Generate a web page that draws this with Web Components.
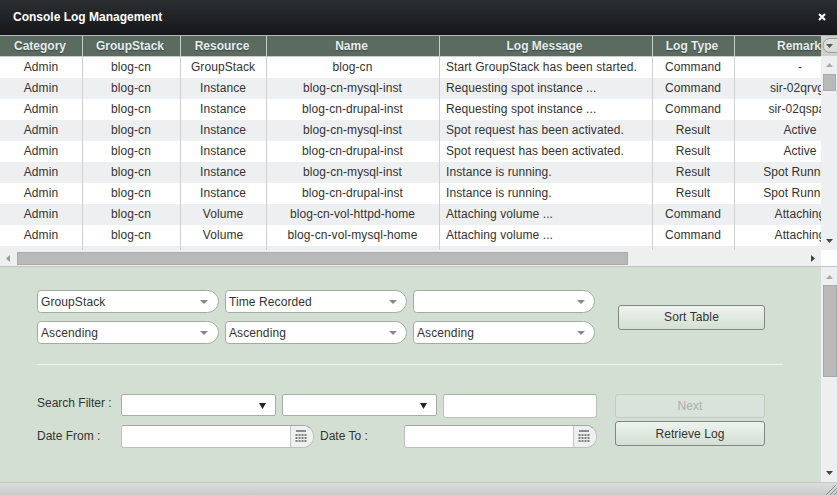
<!DOCTYPE html>
<html>
<head>
<meta charset="utf-8">
<title>Console Log Management</title>
<style>
    html, body { margin: 0; height: 100%; overflow: hidden; background: #eeeff1; }
    body { font: 12px "Liberation Sans", Arial, sans-serif; color: #333; }
</style>
</head>
<body>
<log-window heading="Console Log Management">
    <log-table></log-table>
    <filter-panel></filter-panel>
</log-window>
<script>
const ROWS = [
    ['Admin', 'blog-cn', 'GroupStack', 'blog-cn', 'Start GroupStack has been started.', 'Command', '-'],
    ['Admin', 'blog-cn', 'Instance', 'blog-cn-mysql-inst', 'Requesting spot instance ...', 'Command', 'sir-02qrvgk'],
    ['Admin', 'blog-cn', 'Instance', 'blog-cn-drupal-inst', 'Requesting spot instance ...', 'Command', 'sir-02qspak'],
    ['Admin', 'blog-cn', 'Instance', 'blog-cn-mysql-inst', 'Spot request has been activated.', 'Result', 'Active'],
    ['Admin', 'blog-cn', 'Instance', 'blog-cn-drupal-inst', 'Spot request has been activated.', 'Result', 'Active'],
    ['Admin', 'blog-cn', 'Instance', 'blog-cn-mysql-inst', 'Instance is running.', 'Result', 'Spot Running'],
    ['Admin', 'blog-cn', 'Instance', 'blog-cn-drupal-inst', 'Instance is running.', 'Result', 'Spot Running'],
    ['Admin', 'blog-cn', 'Volume', 'blog-cn-vol-httpd-home', 'Attaching volume ...', 'Command', 'Attaching'],
    ['Admin', 'blog-cn', 'Volume', 'blog-cn-vol-mysql-home', 'Attaching volume ...', 'Command', 'Attaching'],
    ['', '', '', '', '', '', '']
]
const COLUMNS = ['Category', 'GroupStack', 'Resource', 'Name', 'Log Message', 'Log Type', 'Remark']

class LogWindow extends HTMLElement {
    constructor() {
        super()
        this.root = this.attachShadow({ mode: 'open' })
    }

    connectedCallback() {
        this.root.innerHTML = `<style>
      :host {
        display: flex;
        flex-direction: column;
        width: 837px;
        height: 495px;
        overflow: hidden;
      }
      header {
        flex: 0 0 35px;
        display: flex;
        align-items: center;
        justify-content: space-between;
        padding: 0 11px 2px 13px;
        box-sizing: border-box;
        background: linear-gradient(#2b2f32, #15171a);
        color: #fff;
        font-weight: bold;
      }
      svg { display: block; }
      main { flex: 1; display: flex; flex-direction: column; min-height: 0; }
      footer {
        flex: 0 0 13px;
        display: flex;
        justify-content: flex-end;
        align-items: flex-end;
        background: linear-gradient(#dcdddd, #c9caca);
        border-top: 1px solid #c6c8c6;
        box-sizing: border-box;
      }
    </style>
    <header>
        <span>${this.getAttribute('heading')}</span>
        <svg width="8" height="8" viewBox="0 0 8 8"><path d="M1 1L7 7M7 1L1 7" stroke="#fff" stroke-width="2"/></svg>
    </header>
    <main><slot></slot></main>
    <footer>
        <svg width="11" height="11" viewBox="0 0 11 11" fill="none" stroke="#8f8f8f"><path d="M0 11L10 1M4 11L11 4M8 11L11 8"/></svg>
    </footer>`
    }
}

class ScrollBar extends HTMLElement {
    constructor() {
        super()
        this.root = this.attachShadow({ mode: 'open' })
    }

    connectedCallback() {
        const start = this.getAttribute('start')
        const size = this.getAttribute('size')
        const lead = this.getAttribute('lead') || 7
        const gutter = this.getAttribute('gutter') || 1
        const horizontal = this.getAttribute('orient') === 'h'
        this.root.innerHTML = `<style>
      :host {
        display: flex;
        flex-direction: ${horizontal ? 'row' : 'column'};
        flex: 0 0 16px;
        ${horizontal ? 'height' : 'width'}: 16px;
        align-items: ${horizontal ? 'center' : 'stretch'};
        justify-content: space-between;
        background: #eeeff1;
        box-sizing: border-box;
      }
      .thumb {
        background: #b9b9b9;
        border: 1px solid #a9a9a9;
        box-sizing: border-box;
        ${horizontal
            ? `width: ${size}px; height: 13px; margin-left: ${start}px;`
            : `height: ${size}px; margin: ${start}px ${gutter}px 0 2px;`}
      }
      .track { flex: 1; display: flex; ${horizontal ? '' : 'flex-direction: column;'} }
      svg { display: block; flex: none; }
      .end { ${horizontal ? 'margin: 0 6px;' : 'margin: 0 auto 7px;'} }
      .first { ${horizontal ? 'margin-left: 6px;' : `margin: ${lead}px auto 0;`} }
    </style>
    ${horizontal
        ? `<svg class="first" width="4" height="7" viewBox="0 0 4 7"><path d="M4 0V7L0 3.5Z" fill="#999"/></svg>`
        : `<svg class="first" width="7" height="4" viewBox="0 0 7 4"><path d="M0 4H7L3.5 0Z" fill="#aaa"/></svg>`}
    <div class="track"><div class="thumb"></div></div>
    ${horizontal
        ? `<svg class="end" width="4" height="7" viewBox="0 0 4 7"><path d="M0 0V7L4 3.5Z" fill="#444"/></svg>`
        : `<svg class="end" width="7" height="4" viewBox="0 0 7 4"><path d="M0 0H7L3.5 4Z" fill="#444"/></svg>`}`
    }
}

class LogTable extends HTMLElement {
    constructor() {
        super()
        this.root = this.attachShadow({ mode: 'open' })
    }

    connectedCallback() {
        const head = COLUMNS.map(c => `<div class="th">${c}</div>`).join('')
        const body = ROWS.map((row, r) => row.map((text, i) =>
            `<div class="td ${r % 2 ? 'alt' : ''} ${i === 4 ? 'left' : ''}">${text}</div>`).join('')).join('')
        this.root.innerHTML = `<style>
      :host {
        display: flex;
        flex-direction: column;
        flex: 0 0 232px;
        border-bottom: 1px solid #c0c4c0;
        box-sizing: border-box;
      }
      .top { flex: 0 0 215px; display: flex; min-height: 0; }
      .clip { width: 821px; overflow: hidden; background: #fff; }
      .grid {
        display: grid;
        width: 866px;
        grid-template-columns: 82px 98px 86px 173px 213px 82px 132px;
        grid-template-rows: 21px repeat(10, 21px);
        border-top: 1px solid #b4b8b4;
      }
      .th {
        background: #5b6b60;
        color: #e6edf2;
        font-weight: bold;
        text-align: center;
        line-height: 20px;
        padding-right: 2px;
        box-shadow: inset 1px 0 0 #c8cec9;
        border-bottom: 1px solid #c8cec9;
        text-shadow: 0 1px 1px #39443c;
      }
      .td {
        text-align: center;
        line-height: 20px;
        white-space: nowrap;
        overflow: hidden;
        letter-spacing: .08px;
        box-shadow: inset 1px 0 0 #d0d0d0;
      }
      .th:nth-child(7n+1), .td:nth-child(7n+1) { box-shadow: none; }
      .alt { background: #eeeff1; }
      .left { text-align: left; padding-left: 7px; }
      .side { flex: 0 0 16px; display: flex; flex-direction: column; background: #eeeff1; }
      .menu {
        flex: 0 0 21px;
        background: #cfd1cf;
        border-top: 1px solid #b4b8b4;
        box-sizing: border-box;
      }
      .side scroll-bar { flex: 1; }
      .bottom { flex: 0 0 16px; display: flex; }
      .bottom scroll-bar { flex: 0 0 821px; }
      .corner { flex: 1; background: #fff; }
      svg { display: block; }
    </style>
    <div class="top">
        <div class="clip"><div class="grid">${head}${body}</div></div>
        <div class="side">
            <div class="menu">
                <svg width="16" height="20" viewBox="0 0 16 20"><path d="M16 2.5H9a7 7 0 0 0 0 14H16" fill="#dcdedc" stroke="#9a9d9a"/><path d="M5 8H12L8.5 12Z" fill="#555"/></svg>
            </div>
            <scroll-bar start="7" size="17"></scroll-bar>
        </div>
    </div>
    <div class="bottom">
        <scroll-bar orient="h" start="7" size="611"></scroll-bar>
        <div class="corner"></div>
    </div>`
    }
}

class SortCombo extends HTMLElement {
    constructor() {
        super()
        this.root = this.attachShadow({ mode: 'open' })
    }

    connectedCallback() {
        this.root.innerHTML = `<style>
      :host {
        display: flex;
        align-items: center;
        width: 182px;
        height: 23px;
        padding: 0 10px 0 3px;
        box-sizing: border-box;
        background: #fff;
        border: 1px solid #a4aaa4;
        border-radius: 4px 12px 12px 4px;
        letter-spacing: .1px;
      }
      svg { display: block; margin-left: auto; }
    </style>
    <slot></slot>
    <svg width="8" height="4" viewBox="0 0 8 4"><path d="M0 0H8L4 4Z" fill="#888"/></svg>`
    }
}

class FilterSelect extends HTMLElement {
    constructor() {
        super()
        this.root = this.attachShadow({ mode: 'open' })
    }

    connectedCallback() {
        this.root.innerHTML = `<style>
      :host {
        display: flex;
        align-items: center;
        justify-content: flex-end;
        width: 155px;
        height: 22px;
        padding-right: 9px;
        box-sizing: border-box;
        background: #fff;
        border: 1px solid #a9ada9;
        border-radius: 2px;
      }
      svg { display: block; }
    </style>
    <svg width="7" height="7" viewBox="0 0 7 7"><path d="M0 1H7L3.5 7Z" fill="#222"/></svg>`
    }
}

class DateField extends HTMLElement {
    constructor() {
        super()
        this.root = this.attachShadow({ mode: 'open' })
    }

    connectedCallback() {
        this.root.innerHTML = `<style>
      :host {
        display: flex;
        height: 23px;
        width: ${this.getAttribute('width')}px;
        box-sizing: border-box;
        background: #fff;
        border: 1px solid #bcc0bc;
        border-top-color: #a4a8a4;
        border-radius: 3px 11px 11px 3px;
        overflow: hidden;
      }
      .input { flex: 1; }
      .cal {
        flex: 0 0 23px;
        display: flex;
        align-items: center;
        justify-content: center;
        padding-right: 3px;
        box-sizing: border-box;
        background: #eeeff0;
        border-left: 1px solid #c4c7c4;
      }
      svg { display: block; }
    </style>
    <div class="input"></div>
    <div class="cal">
        <svg width="12" height="13" viewBox="0 0 12 13" fill="#7d7d7d">
            <rect x="1" y="0" width="10" height="2" fill="#8c8c8c"/>
            <path d="M0 4h2v2H0zM3 4h2v2H3zM6 4h2v2H6zM9 4h2v2H9zM0 7h2v2H0zM3 7h2v2H3zM6 7h2v2H6zM9 7h2v2H9zM0 10h2v2H0zM3 10h2v2H3zM6 10h2v2H6zM9 10h2v2H9z" transform="translate(.5 0)"/>
        </svg>
    </div>`
    }
}

class PanelButton extends HTMLElement {
    constructor() {
        super()
        this.root = this.attachShadow({ mode: 'open' })
    }

    connectedCallback() {
        const off = this.hasAttribute('disabled')
        this.root.innerHTML = `<style>
      :host {
        display: flex;
        align-items: center;
        justify-content: center;
        height: ${off ? 24 : 25}px;
        box-sizing: border-box;
        width: ${this.getAttribute('width')}px;
        border: 1px solid ${off ? '#c2ccc2' : '#7e8880'};
        border-radius: 3px;
        background: ${off ? '#d9e3d9' : 'linear-gradient(#eef3ee, #d4dfd4)'};
        color: ${off ? '#a9b0a9' : '#333'};
        letter-spacing: .1px;
      }
    </style>
    <slot></slot>`
    }
}

class FilterPanel extends HTMLElement {
    constructor() {
        super()
        this.root = this.attachShadow({ mode: 'open' })
    }

    connectedCallback() {
        this.root.innerHTML = `<style>
      :host {
        display: flex;
        flex: 1;
        min-height: 0;
      }
      .body {
        flex: 0 0 821px;
        box-sizing: border-box;
        padding: 23px 0 0 37px;
        background: #d4dfd3;
      }
      .sort { display: flex; align-items: center; gap: 23px; }
      .combos { display: grid; grid-template-columns: repeat(3, 182px); gap: 8px 6px; }
      .combos sort-combo:not(:nth-child(3n+1)) { padding-right: 9px; }
      hr {
        width: 746px;
        height: 1px;
        margin: 20px 0 29px;
        border: 0;
        background: #f0f4f0;
      }
      .filter { display: flex; gap: 18px; }
      .fields { display: flex; flex-direction: column; width: 560px; gap: 7px; }
      .row { display: flex; align-items: flex-start; }
      .label { flex: 0 0 84px; line-height: 19px; }
      .date { line-height: 22px; }
      .row filter-select + filter-select { margin-left: 6px; }
      .plain {
        width: 154px;
        height: 24px;
        margin-left: 6px;
        box-sizing: border-box;
        background: #fff;
        border: 1px solid #bcc0bc;
        border-top-color: #a8aca8;
        border-radius: 3px;
      }
      .to { flex: 0 0 90px; padding-left: 6px; box-sizing: border-box; line-height: 22px; }
      .actions { display: flex; flex-direction: column; gap: 3px; }
      scroll-bar { flex: 0 0 16px; }
    </style>
    <div class="body">
        <div class="sort">
            <div class="combos">
                <sort-combo>GroupStack</sort-combo>
                <sort-combo>Time Recorded</sort-combo>
                <sort-combo></sort-combo>
                <sort-combo>Ascending</sort-combo>
                <sort-combo>Ascending</sort-combo>
                <sort-combo>Ascending</sort-combo>
            </div>
            <panel-button width="147">Sort Table</panel-button>
        </div>
        <hr>
        <div class="filter">
            <div class="fields">
                <div class="row">
                    <span class="label">Search Filter :</span>
                    <filter-select></filter-select>
                    <filter-select></filter-select>
                    <div class="plain"></div>
                </div>
                <div class="row">
                    <span class="label date">Date From :</span>
                    <date-field width="193"></date-field>
                    <span class="to">Date To :</span>
                    <date-field width="193"></date-field>
                </div>
            </div>
            <div class="actions">
                <panel-button width="150" disabled>Next</panel-button>
                <panel-button width="150">Retrieve Log</panel-button>
            </div>
        </div>
    </div>
    <scroll-bar start="6" size="92" lead="8" gutter="0"></scroll-bar>`
    }
}

customElements.define('log-window', LogWindow)
customElements.define('scroll-bar', ScrollBar)
customElements.define('log-table', LogTable)
customElements.define('sort-combo', SortCombo)
customElements.define('filter-select', FilterSelect)
customElements.define('date-field', DateField)
customElements.define('panel-button', PanelButton)
customElements.define('filter-panel', FilterPanel)
</script>
</body>
</html>
